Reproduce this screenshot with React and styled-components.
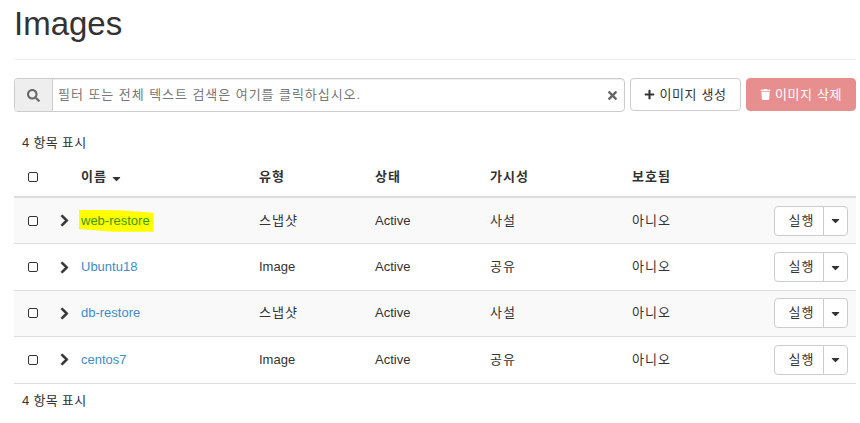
import React from "react"
import styled, { createGlobalStyle } from "styled-components"
import { FaSearch, FaTimes, FaPlus, FaTrash, FaChevronRight, FaCaretDown } from "react-icons/fa"

const FONT = `"Liberation Sans", "Noto Sans CJK KR", sans-serif`

const rows = [
  { name: "web-restore", type: "스냅샷", status: "Active", vis: "사설", prot: "아니오", marked: true },
  { name: "Ubuntu18", type: "Image", status: "Active", vis: "공유", prot: "아니오" },
  { name: "db-restore", type: "스냅샷", status: "Active", vis: "사설", prot: "아니오" },
  { name: "centos7", type: "Image", status: "Active", vis: "공유", prot: "아니오" },
]

const isKorean = (text) => /[가-힣]/.test(text)

export default function App() {
  return (
    <>
      <GlobalStyle />
      <Page>
        <Title>Images</Title>
        <Toolbar>
          <SearchGroup>
            <SearchAddon><FaSearch size={13} /></SearchAddon>
            <SearchField>
              <SearchText>필터 또는 전체 텍스트 검색은 여기를 클릭하십시오.</SearchText>
              <ClearIcon><FaTimes size={13} /></ClearIcon>
            </SearchField>
          </SearchGroup>
          <CreateButton><FaPlus size={11} />이미지 생성</CreateButton>
          <DeleteButton><FaTrash size={11} />이미지 삭제</DeleteButton>
        </Toolbar>
        <Count>4 항목 표시</Count>
        <HeadRow>
          <Check />
          <span />
          <HeadCell>이름<FaCaretDown size={13} /></HeadCell>
          <HeadCell>유형</HeadCell>
          <HeadCell>상태</HeadCell>
          <HeadCell>가시성</HeadCell>
          <HeadCell>보호됨</HeadCell>
        </HeadRow>
        {rows.map((r, i) => (
          <Row key={r.name} $odd={i % 2 === 0}>
            <Check />
            <Chevron><FaChevronRight size={13} /></Chevron>
            <NameLink $marked={r.marked}>{r.name}</NameLink>
            <Cell $wide={isKorean(r.type)}>{r.type}</Cell>
            <Cell>{r.status}</Cell>
            <Cell $wide>{r.vis}</Cell>
            <Cell $wide>{r.prot}</Cell>
            <Actions>
              <RunButton>실행</RunButton>
              <CaretButton><FaCaretDown size={13} /></CaretButton>
            </Actions>
          </Row>
        ))}
        <Count $bottom>4 항목 표시</Count>
      </Page>
    </>
  )
}

const GlobalStyle = createGlobalStyle`
  html, body { margin: 0; background: #fff; overflow: hidden; }
  body { font: 13px/18px ${FONT}; color: #333; }
`

const Page = styled.div`
  width: 842px;
  margin-left: 14px;
`

const Title = styled.h1`
  margin: 0;
  height: 59px;
  border-bottom: 1px solid #eee;
  font: 500 33px/48px ${FONT};
  color: #333;
`

const Toolbar = styled.div`
  display: flex;
  align-items: flex-start;
  gap: 5px;
  margin-top: 18px;
`

const SearchGroup = styled.div`
  flex: 1;
  display: flex;
  height: 34px;
  box-sizing: border-box;
  border: 1px solid #ccc;
  border-radius: 4px;
  box-shadow: inset 0 1px 1px rgba(0, 0, 0, 0.075);
`

const SearchAddon = styled.div`
  width: 37px;
  display: flex;
  align-items: center;
  justify-content: center;
  background: #eee;
  border-right: 1px solid #ccc;
  border-radius: 3px 0 0 3px;
  color: #666;
`

const SearchField = styled.div`
  flex: 1;
  display: flex;
  align-items: center;
  justify-content: space-between;
  padding: 0 5px 0 5px;
`

const SearchText = styled.span`
  color: #777;
  letter-spacing: 0.95px;
`

const ClearIcon = styled.span`
  display: flex;
  color: #666;
`

const ToolButton = styled.button`
  height: 33px;
  box-sizing: border-box;
  border-radius: 4px;
  display: flex;
  align-items: center;
  justify-content: center;
  gap: 4px;
  padding: 0;
  font: 13px/18px ${FONT};
  letter-spacing: 0.6px;
`

const CreateButton = styled(ToolButton)`
  width: 111px;
  background: #fff;
  border: 1px solid #ccc;
  color: #333;
`

const DeleteButton = styled(ToolButton)`
  width: 110px;
  background: #e78f8e;
  border: 1px solid #e78f8e;
  color: #fff;
`

const Count = styled.div`
  padding-left: 8px;
  margin-top: ${(p) => (p.$bottom ? "8px" : "22px")};
  height: 18px;
  letter-spacing: 0.3px;
`

const columns = "15px 38px 178px 116px 115px 142px 1fr"

const HeadRow = styled.div`
  display: grid;
  grid-template-columns: ${columns} auto;
  align-items: center;
  height: 38px;
  margin-top: 6px;
  padding-left: 14px;
  border-bottom: 2px solid #ddd;
`

const HeadCell = styled.span`
  font-weight: 700;
  display: inline-flex;
  align-items: center;
  gap: 3px;
  letter-spacing: 1px;
  & svg { margin-top: 3px; }
`

const Row = styled.div`
  display: grid;
  grid-template-columns: ${columns} auto;
  align-items: center;
  height: 46.4px;
  box-sizing: border-box;
  padding: 0 8px 0 14px;
  border-bottom: 1px solid #ddd;
  background: ${(p) => (p.$odd ? "#f9f9f9" : "#fff")};
`

const Cell = styled.span`
  letter-spacing: ${(p) => (p.$wide ? "1px" : "0")};
`

const Check = styled.span`
  width: 8px;
  height: 8px;
  border: 1px solid #333;
  border-radius: 2px;
  background: #fff;
`

const Chevron = styled.span`
  display: flex;
  padding-left: 15px;
  color: #333;
  & svg { stroke: #333; stroke-width: 30px; }
`

const NameLink = styled.a`
  color: ${(p) => (p.$marked ? "#3c9a12" : "#428bca")};
  justify-self: start;
  ${(p) => p.$marked && `
    background: #ffff00;
    margin-left: -2px;
    padding: 2px 4px 2px 2px;
    clip-path: polygon(0 0, 55% 3%, 100% 14%, 100% 100%, 45% 100%, 0 88%);
  `}
`

const Actions = styled.div`
  display: flex;
  height: 30px;
`

const RunButton = styled.button`
  width: 50px;
  padding: 0 0 0 5px;
  box-sizing: border-box;
  background: #fff;
  border: 1px solid #ccc;
  border-radius: 4px 0 0 4px;
  font: 13px/18px ${FONT};
  letter-spacing: 1px;
  color: #333;
`

const CaretButton = styled.button`
  width: 25px;
  padding: 0;
  margin-left: -1px;
  box-sizing: border-box;
  display: flex;
  align-items: center;
  justify-content: center;
  background: #fff;
  border: 1px solid #ccc;
  border-radius: 0 4px 4px 0;
  color: #333;
`
